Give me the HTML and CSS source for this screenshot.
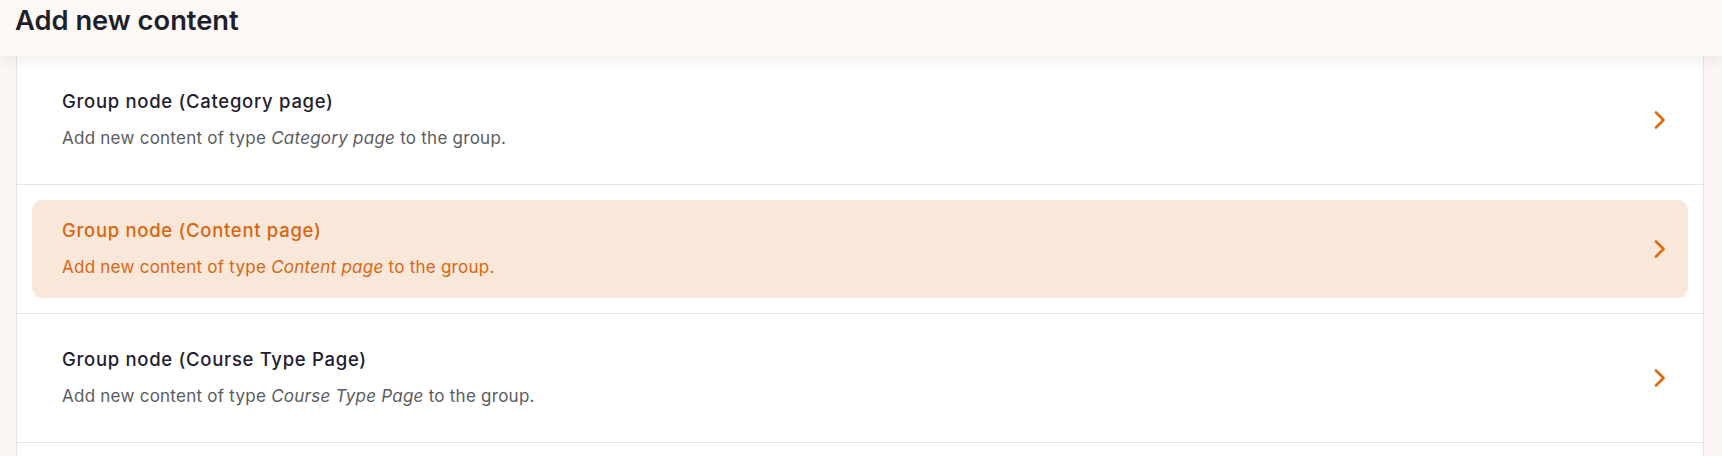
FILE: index.html
```html
<!DOCTYPE html>
<html lang="en">
<head>
<meta charset="utf-8">
<title>Add new content</title>
<link rel="stylesheet" href="styles.css">
</head>
<body>
<header class="page-header">
  <h1 class="page-title">Add new content</h1>
</header>
<main class="page">
  <ul class="card">
    <li class="row">
      <a class="item" href="#">
        <div class="item-text">
          <div class="item-title">Group node (Category page)</div>
          <div class="item-desc">Add new content of type <em>Category page</em> to the group.</div>
        </div>
        <svg class="chev" width="12" height="18" viewBox="0 0 12 18"><polyline points="2,1.5 9.5,9 2,16.5" fill="none" stroke="currentColor" stroke-width="2.6" stroke-linecap="round" stroke-linejoin="round"/></svg>
      </a>
    </li>
    <li class="row">
      <a class="item item-active" href="#">
        <div class="item-text">
          <div class="item-title">Group node (Content page)</div>
          <div class="item-desc">Add new content of type <em>Content page</em> to the group.</div>
        </div>
        <svg class="chev" width="12" height="18" viewBox="0 0 12 18"><polyline points="2,1.5 9.5,9 2,16.5" fill="none" stroke="currentColor" stroke-width="2.6" stroke-linecap="round" stroke-linejoin="round"/></svg>
      </a>
    </li>
    <li class="row">
      <a class="item" href="#">
        <div class="item-text">
          <div class="item-title">Group node (Course Type Page)</div>
          <div class="item-desc">Add new content of type <em>Course Type Page</em> to the group.</div>
        </div>
        <svg class="chev" width="12" height="18" viewBox="0 0 12 18"><polyline points="2,1.5 9.5,9 2,16.5" fill="none" stroke="currentColor" stroke-width="2.6" stroke-linecap="round" stroke-linejoin="round"/></svg>
      </a>
    </li>
  </ul>
</main>
</body>
</html>
```

FILE: styles.css
```css
* { box-sizing: border-box; }
html, body {
  margin: 0;
  padding: 0;
  background: #fcf7f4;
  font-family: Inter, "Noto Sans", sans-serif;
  overflow: hidden;
  height: 456px;
}
.page-header {
  position: relative;
  z-index: 2;
  height: 56px;
  background: #fdf9f6;
  box-shadow: 0 4px 14px rgba(0, 0, 0, 0.07);
  padding: 4px 0 0 15px;
}
.page-title {
  margin: 0;
  font-size: 27.3px;
  line-height: 34px;
  font-weight: 600;
  letter-spacing: 0;
  color: #1e1f2b;
}
.page {
  padding: 0 18px 0 16px;
}
.card {
  list-style: none;
  margin: 0;
  padding: 0 0 14px;
  background: #fff;
  border-left: 1px solid #e6e4e3;
  border-right: 1px solid #e6e4e3;
}
.row {
  padding: 15px;
  border-bottom: 1px solid #e8e6e5;
  height: 129px;
}
.item {
  display: flex;
  align-items: center;
  justify-content: space-between;
  height: 98px;
  padding: 0 22px 0 30px;
  border-radius: 10px;
  text-decoration: none;
  color: #1f2030;
}
.item-active {
  background: #f9e7da;
  color: #d9660e;
}
.item-text {
  display: flex;
  flex-direction: column;
  gap: 15px;
  margin-top: -2px;
}
.item-title {
  font-size: 18.5px;
  line-height: 23px;
  font-weight: 500;
  letter-spacing: 0.7px;
  color: #1f2030;
}
.item-desc {
  font-size: 17px;
  line-height: 21px;
  letter-spacing: 0.25px;
  color: #5b5b60;
}
.item-active .item-title,
.item-active .item-desc {
  color: #d9660e;
}
.chev {
  color: #e06a0b;
  flex: none;
}
```
